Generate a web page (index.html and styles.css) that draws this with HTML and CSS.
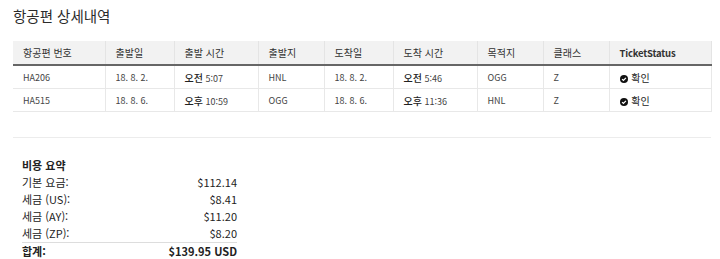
FILE: index.html
```html
<!DOCTYPE html>
<html lang="ko">
<head>
<meta charset="utf-8">
<link rel="stylesheet" href="styles.css">
</head>
<body>
<h2 class="title">항공편 상세내역</h2>
<table class="flights">
  <colgroup>
    <col class="c1"><col class="c2"><col class="c3"><col class="c4"><col class="c5"><col class="c6"><col class="c7"><col class="c8"><col class="c9">
  </colgroup>
  <thead>
    <tr>
      <th>항공편 번호</th><th>출발일</th><th>출발 시간</th><th>출발지</th><th>도착일</th><th>도착 시간</th><th>목적지</th><th>클래스</th><th class="en">TicketStatus</th>
    </tr>
  </thead>
  <tbody>
    <tr>
      <td>HA206</td><td>18. 8. 2.</td><td><span class="ampm">오전</span> 5:07</td><td>HNL</td><td>18. 8. 2.</td><td><span class="ampm">오전</span> 5:46</td><td>OGG</td><td>Z</td>
      <td class="status"><svg class="check" viewBox="0 0 10 10" width="8" height="8"><circle cx="5" cy="5" r="5" fill="#111"/><path d="M2.6 5.1 L4.3 6.8 L7.4 3.6" stroke="#fff" stroke-width="1.6" fill="none"/></svg> 확인</td>
    </tr>
    <tr>
      <td>HA515</td><td>18. 8. 6.</td><td><span class="ampm">오후</span> 10:59</td><td>OGG</td><td>18. 8. 6.</td><td><span class="ampm">오후</span> 11:36</td><td>HNL</td><td>Z</td>
      <td class="status"><svg class="check" viewBox="0 0 10 10" width="8" height="8"><circle cx="5" cy="5" r="5" fill="#111"/><path d="M2.6 5.1 L4.3 6.8 L7.4 3.6" stroke="#fff" stroke-width="1.6" fill="none"/></svg> 확인</td>
    </tr>
  </tbody>
</table>
<hr class="divider">
<section class="summary">
  <div class="sum-title">비용 요약</div>
  <div class="sum-row"><span>기본 요금:</span><span>$112.14</span></div>
  <div class="sum-row"><span>세금 (US):</span><span>$8.41</span></div>
  <div class="sum-row"><span>세금 (AY):</span><span>$11.20</span></div>
  <div class="sum-row"><span>세금 (ZP):</span><span>$8.20</span></div>
  <div class="sum-row total"><span>합계:</span><span>$139.95 USD</span></div>
</section>
</body>
</html>
```
FILE: styles.css
```css
html, body {
  margin: 0;
  padding: 0;
  background: #fff;
}
body {
  padding: 0 9px 0 13px;
  font-family: "Noto Sans CJK KR", "Noto Sans", sans-serif;
  color: #333;
}
.title {
  margin: 0;
  padding-top: 6px;
  height: 41px;
  box-sizing: border-box;
  font-size: 14.5px;
  font-weight: 400;
  line-height: 20px;
  color: #2b2b2b;
}
.flights {
  width: 698px;
  border-collapse: collapse;
  table-layout: fixed;
  font-size: 9px;
}
.c1 { width: 92px; }
.c2 { width: 69px; }
.c3 { width: 84px; }
.c4 { width: 66px; }
.c5 { width: 69px; }
.c6 { width: 84px; }
.c7 { width: 66px; }
.c8 { width: 66px; }
.c9 { width: 102px; }
.flights th {
  background: #f2f2f2;
  height: 23px;
  padding: 0 10px;
  text-align: left;
  font-weight: 400;
  font-size: 10px;
  color: #333;
  border-right: 1px solid #e4e4e4;
  border-bottom: 2px solid #666;
}
.flights th.en {
  font-weight: 700;
  font-size: 9.5px;
  letter-spacing: -0.2px;
}
.flights td {
  height: 22px;
  padding: 0 10px;
  border-right: 1px solid #e8e8e8;
  border-bottom: 1px solid #e8e8e8;
  color: #444;
  font-size: 9px;
}
.flights td .ampm {
  font-size: 10px;
  font-weight: 500;
  color: #222;
}
.flights td.status {
  font-size: 10px;
  color: #222;
}
.check {
  vertical-align: -1px;
  margin-right: 1px;
}
.divider {
  margin: 25px 0 0;
  border: 0;
  border-top: 1px solid #ececec;
  width: 698px;
}
.summary {
  width: 215px;
  margin: 18px 0 0 9px;
  font-size: 11px;
  color: #222;
}
.sum-title {
  font-weight: 700;
  line-height: 18px;
}
.sum-row {
  display: flex;
  justify-content: space-between;
  line-height: 17px;
}
.sum-row.total {
  border-top: 1px solid #ddd;
  font-weight: 700;
}
```
